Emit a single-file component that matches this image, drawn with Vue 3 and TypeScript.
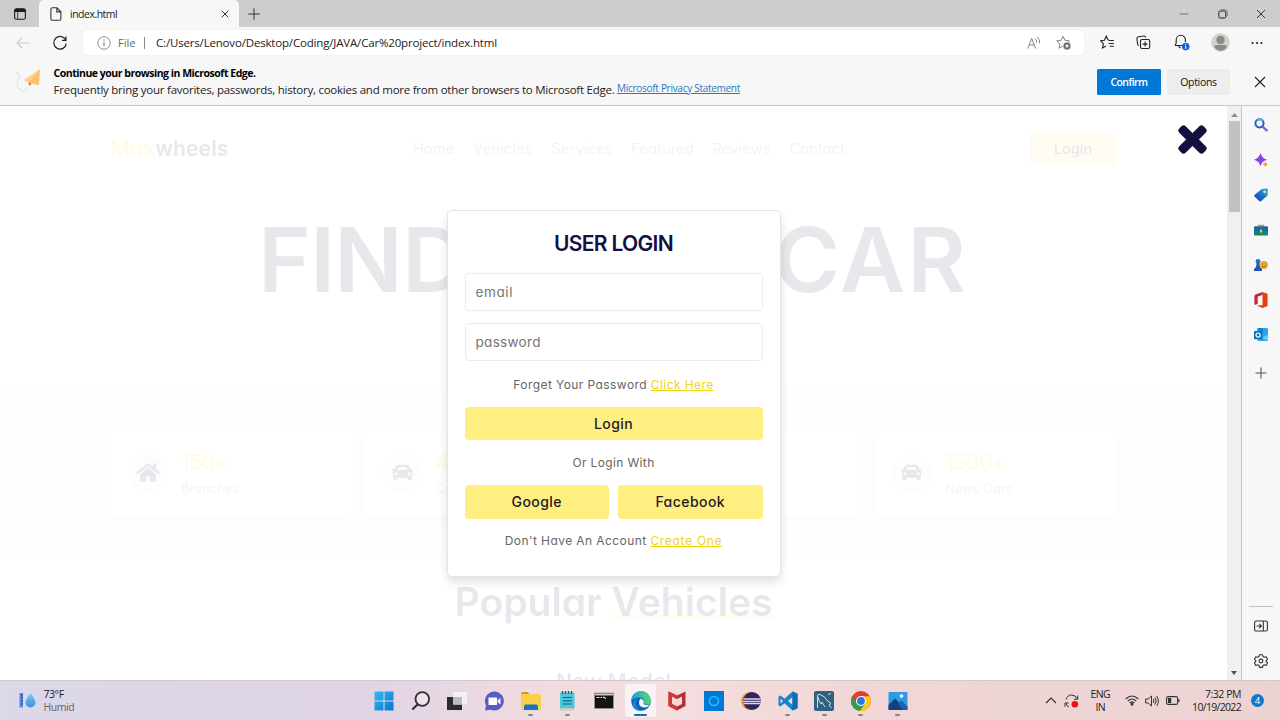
<script setup lang="ts">
interface Stat { value: string; label: string; icon: 'home' | 'car' }

const navLinks = ['Home', 'Vehicles', 'Services', 'Featured', 'Reviews', 'Contact']
const stats: Stat[] = [
  { value: '150+', label: 'Branches', icon: 'home' },
  { value: '4770+', label: 'Cars Sold', icon: 'car' },
  { value: '320+', label: 'Happy Clients', icon: 'car' },
  { value: '1500+', label: 'News Cars', icon: 'car' },
]
</script>

<template>
  <div class="desktop">
    <div class="tabstrip">
      <svg class="tab-actions" width="12" height="12" viewBox="0 0 12 12"><rect x=".6" y=".8" width="10.8" height="10.4" rx="1.8" fill="none" stroke="#1c1c1c" stroke-width="1.1" /><path d="M.6 4V2.5Q.6.8 2.4.8h7.2q1.8 0 1.8 1.7V4z" fill="#1c1c1c" /><path d="M3.7 4v7" stroke="#1c1c1c" stroke-width=".8" /></svg>
      <div class="tab">
        <svg width="12" height="14" viewBox="0 0 12 14" fill="none" stroke="#333" stroke-width="1.1"><path d="M2.3.8h4.6l4 4v7q0 1.4-1.4 1.4H2.3Q.9 13.2.9 11.8V2.2Q.9.8 2.3.8zM6.8.9v4h4" /></svg>
        <span class="tab-title">index.html</span>
        <svg width="8" height="8" viewBox="0 0 8 8" stroke="#333" stroke-width="1"><path d="M.7.7l6.6 6.6M7.3.7L.7 7.3" /></svg>
      </div>
      <svg class="new-tab" width="12" height="12" viewBox="0 0 12 12" stroke="#333" stroke-width="1"><path d="M6 .3v11.4M.3 6h11.4" /></svg>
      <div class="window-controls">
        <svg width="10" height="10" viewBox="0 0 10 10"><path d="M.5 5h9" stroke="#777" /></svg>
        <svg width="10" height="10" viewBox="0 0 10 10" fill="none" stroke="#222"><rect x=".8" y="2" width="7" height="7" rx="1.4" /><path d="M2.8.8h4.4Q9.2.8 9.2 2.8v4.4" stroke="#777" /></svg>
        <svg width="10" height="10" viewBox="0 0 10 10" stroke="#333"><path d="M1 1l8 8M9 1L1 9" /></svg>
      </div>
    </div>

    <div class="toolbar">
      <svg class="back" width="14" height="12" viewBox="0 0 14 12" fill="none" stroke="#c9c9c9" stroke-width="1.1"><path d="M13.5 6H1M6 1L1 6l5 5" /></svg>
      <svg class="reload" width="16" height="16" viewBox="0 0 16 16" fill="none" stroke="#222" stroke-width="1.2"><path d="M13.8 5.2A6.3 6.3 0 1 0 14.3 8.6M14 1.4v4h-4" /></svg>
      <div class="address">
        <svg width="14" height="14" viewBox="0 0 14 14"><circle cx="7" cy="7" r="6.2" fill="none" stroke="#8a8a8a" /><path d="M7 6v4.2M7 3.6v1.2" stroke="#777" stroke-width="1.1" /></svg>
        <span class="scheme">File</span><i class="bar" />
        <span class="url">C:/Users/Lenovo/Desktop/Coding/JAVA/Car%20project/index.html</span>
        <svg class="read" width="14" height="14" viewBox="0 0 14 14" fill="none" stroke="#858585"><path d="M.8 12.5L4.7 2.5l3.9 10M2.2 9h5M8.2 2.6q1.8 1.5 1.3 4M10.2 1q3 2.6 2.4 6.2" /></svg>
        <svg width="16" height="16" viewBox="0 0 16 16"><path d="M7 1.3l1.9 4 4.4.5-3.2 3 .9 4.4L7 11l-3.9 2.2.8-4.4-3.2-3 4.4-.5z" fill="none" stroke="#858585" /><circle cx="11" cy="11" r="3.9" fill="#666" stroke="#fff" stroke-width=".6" /><path d="M11 9v4M9 11h4" stroke="#fff" /></svg>
      </div>
      <div class="tools">
        <svg width="15" height="15" viewBox="0 0 15 15" fill="none" stroke="#222" stroke-width="1.1"><path d="M9.5 5.3L8.1 5 6.2 1.2l-1.8 4-4 .5 3 3-.9 4.3L6 11M9.3 5.5h4.5M8.7 8.5h5.1M9.7 11.2h4.1" /></svg>
        <svg width="15" height="15" viewBox="0 0 15 15" fill="none" stroke="#222" stroke-width="1.1"><rect x="4.5" y="4.5" width="9.2" height="9" rx="1.6" /><path d="M9.1 6.6v5M6.6 9.1h5M2.7 10.6Q1.8 10 1.5 8.6L.9 3.7Q.8 2 2.5 1.7L8 1q1.4-.1 1.8 1.5" /></svg>
        <svg class="bell" width="16" height="17" viewBox="0 0 16 17"><path d="M1 11.5h8M1 11.5l1.2-2.3V5.8a4.6 4.6 0 0 1 9.2 0V8M4.800 12q0 1.700 1.900 1.900" fill="none" stroke="#222" stroke-width="1.1" /><circle cx="11.700" cy="12.600" r="3.800" fill="#1a63d2" /><path d="M11.700 11.800v3M11.700 10v1" stroke="#fff" /></svg>
        <svg width="19" height="19" viewBox="0 0 19 19"><circle cx="9.5" cy="9.5" r="9.3" fill="#d2d0ce" /><circle cx="9.5" cy="7" r="4.2" fill="#8c8884" /><path d="M3.3 14q0-2 2-2h8.4q2 0 2 2-2.3 3.700-6.200 3.700T3.300 14z" fill="#8c8884" /></svg>
        <svg width="12" height="4" viewBox="0 0 12 4" fill="#222"><circle cx="1.600" cy="2" r="1.100" /><circle cx="6" cy="2" r="1.100" /><circle cx="10.400" cy="2" r="1.100" /></svg>
      </div>
    </div>

    <div class="infobar">
      <svg class="plane" width="26" height="28" viewBox="0 0 26 28"><path d="M1 6.500q4.500.500 3 5.500t-2 7 4 5.500 6-4" fill="none" stroke="#e6e6e6" stroke-width="1.300" /><path d="M25 3L8.500 14.200l4.500 2z" fill="#ffd488" /><path d="M25 3L13 16.200l11 3.300z" fill="#fdc06a" /><path d="M13 16.200l1.600 4 2.200-2.700z" fill="#d98a35" /></svg>
      <div class="info-text">
        <strong>Continue your browsing in Microsoft Edge.</strong>
        <p><span>Frequently bring your favorites, passwords, history, cookies and more from other browsers to Microsoft Edge.</span><a>Microsoft Privacy Statement</a></p>
      </div>
      <button class="confirm">Confirm</button>
      <button class="options">Options</button>
      <svg width="12" height="12" viewBox="0 0 12 12" stroke="#222" stroke-width="1.1"><path d="M1 1l10 10M11 1L1 11" /></svg>
    </div>

    <div class="workspace">
      <div class="page">
        <header>
          <div class="logo"><span>Max</span>wheels</div>
          <nav><a v-for="link in navLinks" :key="link">{{ link }}</a></nav>
          <div class="header-login">Login</div>
        </header>
        <h1><span>FIND</span><span class="car-word">CAR</span></h1>
        <section class="stats">
          <div v-for="s in stats" :key="s.label" class="stat">
            <div class="disc">
              <svg v-if="s.icon === 'home'" width="24" height="21" viewBox="0 0 576 512"><path d="M280 148L96 300v164q0 16 16 16l112-1q16 0 16-16v-95q0-16 16-16h64q16 0 16 16v95q0 16 16 16h112q16 0 16-16V300L296 148q-8-6-16 0zM572 251l-84-69V44q0-12-12-12h-56q-12 0-12 12v72l-89-74q-31-24-61 0L4 251q-9 8-2 17l26 31q8 9 17 2L280 107q8-6 16 0l235 194q9 7 17-2l26-31q7-9-2-17z" fill="#130f40" /></svg>
              <svg v-else width="21" height="21" viewBox="0 0 512 512"><path fill-rule="evenodd" d="M500 168h-56l-23-57q-22-47-74-47H165q-52 0-74 47l-23 57H12q-14 2-12 15l6 24q3 9 12 9h20q-22 18-22 48v48q0 24 16 42v54q0 32 32 32h32q32 0 32-32v-24h256v24q0 32 32 32h32q32 0 32-32v-54q16-18 16-42v-48q0-30-22-48h20q9 0 12-9l6-24q2-13-12-15zM151 135q4-11 14-11h182q10 0 14 11l23 57H128zM96 320q-39 0-44-32t32-40q31-4 60 60 2 12-48 12zm320 0q-50 0-48-12 29-64 60-60 37 8 32 40t-44 32z" fill="#130f40" /></svg>
            </div>
            <div><b>{{ s.value }}</b><small>{{ s.label }}</small></div>
          </div>
        </section>
        <h2>Popular <span>Vehicles</span></h2>
        <h3>New Model</h3>

        <div class="veil">
          <svg class="close" width="29" height="29" viewBox="0 0 29 29" fill="#130f40"><rect x="-2.700" y="10" width="34.400" height="9" rx="3" transform="rotate(45 14.500 14.500)" /><rect x="-2.700" y="10" width="34.400" height="9" rx="3" transform="rotate(-45 14.500 14.500)" /></svg>
          <form class="login" @submit.prevent>
            <h4>USER LOGIN</h4>
            <input class="email" type="email" placeholder="email">
            <input type="password" placeholder="password">
            <p class="forgot">Forget Your Password <a>Click Here</a></p>
            <button>Login</button>
            <p class="or">Or Login With</p>
            <div class="social"><button>Google</button><button>Facebook</button></div>
            <p class="signup">Don't Have An Account <a>Create One</a></p>
          </form>
        </div>
      </div>

      <div class="scrollbar">
        <svg width="7" height="4" viewBox="0 0 7 4"><path d="M0 4l3.500-4L7 4z" fill="#8f8f8f" /></svg>
        <i />
        <svg class="down" width="6" height="4" viewBox="0 0 6 4"><path d="M0 0h6L3 4z" fill="#505050" /></svg>
      </div>

      <aside>
        <svg viewBox="0 0 14 14"><circle cx="5.500" cy="5.300" r="4.100" fill="none" stroke="#1b62d2" stroke-width="2" /><path d="M3 2.200Q6-.1 8.700 2.700" fill="none" stroke="#49b4ef" stroke-width="1.600" /><path d="M9 9l3.600 3.400" stroke="#8a55d7" stroke-width="2.300" stroke-linecap="round" /></svg>
        <svg viewBox="0 0 14 14"><defs><linearGradient id="spark" x1="0" x2="1" y2="1"><stop stop-color="#5c5df0" /><stop offset="1" stop-color="#b32de0" /></linearGradient></defs><path d="M6.500 0q1.200 5.300 6.500 6.700-5.300 1.300-6.500 6.800Q5.200 8 0 6.700 5.200 5.300 6.500 0z" fill="url(#spark)" /><path d="M11.300 8.500q.5 2.300 2.700 2.800-2.200.5-2.700 2.700-.5-2.200-2.700-2.700 2.200-.5 2.700-2.800z" fill="#e8a91f" /></svg>
        <svg viewBox="0 0 14 14"><defs><linearGradient id="tag" x1="1" x2="0" y2="1"><stop stop-color="#35b0ea" /><stop offset=".6" stop-color="#1566c7" /><stop offset="1" stop-color="#174aa3" /></linearGradient></defs><path d="M8 1l5-.5q1 0 .9 1L13.600 7q0 .6-.6 1L7 13.300q-.8.6-1.500 0L.4 8.500q-.6-.8.1-1.500L7 1.400z" fill="url(#tag)" /><circle cx="10.600" cy="3.800" r="1.400" fill="#ffe07a" /></svg>
        <svg viewBox="0 0 14 14"><path d="M4.500 4V2.500h5V4" fill="none" stroke="#d89b20" stroke-width="1.300" /><rect y="3.600" width="14" height="9" rx="1" fill="#17836a" /><path d="M0 4.600q0-1 1-1h12q1 0 1 1V8H0z" fill="#1769ad" /><rect x="6" y="6.400" width="2.200" height="3.200" rx=".6" fill="#f3c23e" /></svg>
        <svg viewBox="0 0 14 14"><circle cx="10" cy="7" r="3.900" fill="#eba82b" /><path d="M8 8q2 2.200 4 0M8.600 5.700v.6M11.400 5.700v.6" stroke="#95600b" stroke-width=".9" fill="none" /><circle cx="4" cy="3.500" r="2.400" fill="#246bc8" /><path d="M2.800 5h2.500L6 9l2 2v2H0v-2l2-2z" fill="#1b55b2" /></svg>
        <svg class="office" viewBox="0 0 14 16"><path d="M8.500 0L13.600 1.800v12.200L8.500 16 2.500 13.500l6-.3z" fill="#e2420e" /><path d="M8.500 0L1.600 2.600Q.4 3.200.4 4.500v7.200q0 1.700 1.700.8l1.600-.7V4.400l4.800-1.300z" fill="#c4243a" /></svg>
        <svg viewBox="0 0 14 14"><rect x="3.500" width="10.500" height="13" rx="1" fill="#28a8ea" /><path d="M3.500 1q0-1 1-1H9v5H3.500z" fill="#1485d4" /><path d="M14 6.500L8 10l6 3z" fill="#67c9f5" /><rect y="3" width="8.300" height="8.300" rx="1" fill="#0b6fbf" /><circle cx="4.100" cy="7.100" r="2.100" fill="none" stroke="#fff" stroke-width="1.200" /></svg>
        <svg class="add" viewBox="0 0 14 14" stroke="#555" stroke-width="1.100"><path d="M7 1.500v11M1.500 7h11" /></svg>
        <div class="aside-foot">
          <svg viewBox="0 0 14 14" fill="none" stroke="#333" stroke-width="1.100"><rect x=".6" y="2" width="12.800" height="10" rx="1.600" /><path d="M9.300 2v10M2.500 7h4.700M5.300 4.900L7.400 7 5.300 9.100" /></svg>
          <svg viewBox="0 0 14 14" fill="none" stroke="#333" stroke-width="1.100" stroke-linejoin="round"><circle cx="7" cy="7" r="1.900" /><path d="M5.500.7h3L9 2.600l1.300.7 1.900-.6 1.400 2.500L12.200 6.600v.9l1.400 1.400-1.400 2.500-1.900-.6-1.300.7-.5 1.900h-3L5 11.500l-1.300-.7-1.900.6L.4 8.900l1.400-1.400v-.9L.4 5.200l1.400-2.500 1.900.6L5 2.600z" /></svg>
        </div>
      </aside>
    </div>

    <div class="taskbar">
      <div class="weather">
        <svg width="17" height="17" viewBox="0 0 17 17"><defs><linearGradient id="drop" x2="0" y2="1"><stop stop-color="#75d1f2" /><stop offset="1" stop-color="#438ae6" /></linearGradient></defs><rect x=".5" y="1" width="3.500" height="14.500" rx=".5" fill="#4f8ee0" /><path d="M2 3h2M2 6h2M2 9h2M2 12h2" stroke="#213e80" /><path d="M11.500 1q5 6.500 5 9.500a4.900 4.900 0 0 1-10 0Q6.500 7.500 11.500 1z" fill="url(#drop)" /></svg>
        <div><span>73°F</span><span class="dim">Humid</span></div>
      </div>
      <div class="apps">
        <div><svg viewBox="0 0 20 20"><defs><linearGradient id="win" x2="1" y2="1"><stop stop-color="#35baf0" /><stop offset="1" stop-color="#0875cf" /></linearGradient></defs><path d="M.5.500h9v9h-9zM10.500.500h9v9h-9zM.5 10.500h9v9h-9zM10.500 10.500h9v9h-9z" fill="url(#win)" /></svg></div>
        <div><svg viewBox="0 0 20 20" fill="none" stroke="#303033" stroke-width="1.800"><circle cx="11.300" cy="8" r="6.800" fill="#ffffff55" /><path d="M6.800 13.200L1.300 18.500" stroke-width="2.200" /></svg></div>
        <div><svg viewBox="0 0 20 20"><rect y="6" width="15" height="13" fill="#2b2a2d" /><path d="M6 1h14.500v12.500H6z" fill="#f3f1f3" /><path d="M6 6h9v7.500H6z" fill="#bdbbbe" /></svg></div>
        <div><svg viewBox="0 0 20 20"><path d="M10.500.500a9.500 9.500 0 1 1-4 18.200L1 19.500l1-5A9.500 9.500 0 0 1 10.500.500z" fill="#5a5bc4" /><path d="M4.500 6.500h8.500v7.500H4.500zM13.700 9.300L16.500 7v6.500l-2.800-2.200z" fill="#fff" /></svg></div>
        <div class="running"><svg viewBox="0 0 20 20"><path d="M0 3q0-2 2-2h4.500L9 3.500H0z" fill="#d9911b" /><rect y="3" width="20" height="16" rx="1.500" fill="#f9cf4b" /><path d="M3 19v-3.700q0-1.800 1.800-1.800h10.400q1.800 0 1.800 1.800V19z" fill="#1673c4" /></svg></div>
        <div class="running"><svg viewBox="0 0 20 20"><rect x="3" y="1.500" width="14.500" height="16.500" rx="1" fill="#4cc6dc" /><path d="M3 17h14.500v1.500q0 1-1 1H4q-1 0-1-1z" fill="#c9cdb6" /><path d="M5.500 0v3M8.500 0v3M11.500 0v3M14.500 0v3" stroke="#185a78" stroke-width="1.300" /><path d="M5.800 6.500h9M5.800 9.800h9M5.800 13h9" stroke="#12677f" stroke-width="1.200" /></svg></div>
        <div><svg viewBox="0 0 20 20"><rect x=".5" y="2" width="19" height="15.500" fill="#131313" stroke="#999" stroke-width=".8" /><path d="M1 2.500h18v2H1z" fill="#ccc" /><path d="M2.500 6.500h3M6.500 6.500H8M9 6l3 1.500" stroke="#eee" stroke-width="1.100" /></svg></div>
        <div class="active"><svg viewBox="0 0 20 20"><defs><linearGradient id="edge" x1="0" x2="1"><stop stop-color="#1e9fe0" /><stop offset="1" stop-color="#56d66c" /></linearGradient></defs><circle cx="10" cy="10" r="9.800" fill="#0c61b5" /><path d="M.2 10A9.800 9.800 0 0 1 19.800 9.500q0 4.300-4.800 4.300-3 0-3-1.500.8-.6.8-2Q12.500 6.500 8 6.500 2.500 6.500.2 10z" fill="url(#edge)" /><path d="M8 7.500q4.300 0 4.800 3.500 0 1-.8 1.700 2 2.300 6.500.9-1.500 3-4.500 3Q8 16.400 8 11.500 8 9 9.500 7.700z" fill="#e9f7ff" /><path d="M7 7.500Q3.500 10 5 14.500T11.500 19.600Q4 20.600 1.200 14.500 2 8.500 7 7.500z" fill="#1787d6" /></svg></div>
        <div><svg viewBox="0 0 20 20"><path d="M1.500.500l8.500 4 8.500-4v14.500L10 19.500 1.500 15z" fill="#b92e32" /><path d="M5 5.500l5 2.500 5-2.500v7.500l-5 2.500L5 13z" fill="#f3dada" /><path d="M1.500.500l8.500 4v3.500L5 5.500V13l5 2.500v4L1.500 15z" fill="#d1383a" /></svg></div>
        <div><svg viewBox="0 0 20 20"><rect width="20" height="20" fill="#0078d7" /><circle cx="10" cy="10" r="4.500" fill="none" stroke="#20c5f5" stroke-width="1.500" /></svg></div>
        <div><svg viewBox="0 0 20 20"><circle cx="9" cy="10" r="9" fill="#f39a2f" /><circle cx="11" cy="10" r="9" fill="#34245c" /><path d="M2.500 8h17.200M2 10.300h18M2.500 12.500h17.200" stroke="#ddd9ec" stroke-width="1.300" /></svg></div>
        <div class="running"><svg viewBox="0 0 20 20"><path d="M14.500.500L19.500 2.800v14.400l-5 2.300-8-7.300-4 3.300-2-1V5.500l2-1 4 3.300zM14.500 6L10 10l4.500 4zM2.500 7.500v5L5 10z" fill="#1683cf" fill-rule="evenodd" /><path d="M14.500.500l5 2.300v14.400l-5 2.300z" fill="#0f6bb5" /></svg></div>
        <div class="running"><svg viewBox="0 0 20 20"><rect width="20" height="20" rx="2" fill="#31617e" /><path d="M3.500 17V5q0-2.500 2.500-1.500Q11 5 13 9.500l4 3-2 1.500 2.500 3M4 6q1 5 3 7l1-2 3 5M14 3.500l3-1" fill="none" stroke="#dfeaf0" stroke-width=".9" /></svg></div>
        <div class="running"><svg viewBox="0 0 20 20"><circle cx="10" cy="10" r="10" fill="#dd3f35" /><path d="M1.300 5A10 10 0 0 0 8.900 19.900L14.300 12.500 5.700 12.500z" fill="#2aa24c" /><path d="M10 5.300h8.800A10 10 0 0 1 8.900 19.900l5.400-7.400z" fill="#fbc916" /><circle cx="10" cy="10" r="5" fill="#fff" /><circle cx="10" cy="10" r="3.900" fill="#2b78e6" /></svg></div>
        <div class="running"><svg viewBox="0 0 20 20"><rect x=".5" y="1" width="19" height="18" rx="1" fill="#2f9be8" /><path d="M.5 14L7 7.500 18.500 19H.5z" fill="#12407f" /><path d="M10 12.500l3.500-3 6 6V19h-4z" fill="#1f62ad" /><circle cx="13.500" cy="5" r="1.800" fill="#fff" /></svg></div>
      </div>
      <div class="tray">
        <svg class="chevron" width="12" height="7" viewBox="0 0 12 7" fill="none" stroke="#333" stroke-width="1.200"><path d="M1 6l5-5 5 5" /></svg>
        <svg class="sync" width="15" height="16" viewBox="0 0 15 16" fill="none" stroke="#333"><path d="M2 6.500Q3.500 2 7.500 2t6 4M13.700 2.500v3.700H10M5 14Q2.500 13 1.700 10M1 13.700V10h3.700" /><circle cx="10.800" cy="11.200" r="3.300" fill="#f00d14" stroke="none" /></svg>
        <div class="lang"><span>ENG</span><span>IN</span></div>
        <svg class="wifi" width="14" height="11" viewBox="0 0 14 11" fill="none" stroke="#333" stroke-width="1.100"><path d="M.7 4Q7-2 13.300 4M2.800 6Q7 2 11.200 6M4.700 8Q7 5.800 9.300 8" /><circle cx="7" cy="9.300" r=".9" fill="#333" /></svg>
        <svg class="sound" width="14" height="12" viewBox="0 0 14 12" fill="none" stroke="#333"><path d="M.7 4h2.500L6.500 1v10L3.200 8H.7zM8.300 4q1.200 2 0 4M10 2.500q2.300 3.500 0 7M11.700 1q3.300 5 0 10" /></svg>
        <svg class="battery" width="14" height="9" viewBox="0 0 14 9"><rect x=".6" y=".6" width="11" height="7.800" rx="1.500" fill="none" stroke="#333" stroke-width="1.100" /><path d="M2 2h3.200v5H2zM12.300 3h1.200v3h-1.200z" fill="#333" /></svg>
        <div class="clock"><span>7:32 PM</span><span class="date">10/19/2022</span></div>
        <b class="badge">4</b>
      </div>
    </div>
  </div>
</template>

<style>
body { overflow: hidden; }
</style>

<style scoped>
* { box-sizing: border-box; }
svg { display: block; flex: none; }
h1, h2, h3, h4, p { margin: 0; }
button { border: 0; padding: 0; }
.desktop { width: 1280px; height: 720px; display: flex; flex-direction: column; overflow: hidden; background: #f7f7f7; font-family: 'Open Sans', 'Noto Sans', sans-serif; color: #222; }

.tabstrip { height: 27px; flex: none; background: #cdcdcd; display: flex; align-items: center; }
.tab-actions { margin-left: 14px; }
.tab { width: 200px; height: 27px; margin-left: 13px; padding: 0 10px 0 11px; background: #f7f7f7; border-radius: 5px 5px 0 0; display: flex; align-items: center; }
.tab-title { font-size: 10.5px; letter-spacing: -.5px; margin-left: 8px; flex: 1; }
.new-tab { margin-left: 9px; }
.window-controls { margin-left: auto; margin-right: 14px; display: flex; gap: 28.5px; }

.toolbar { height: 31px; flex: none; display: flex; align-items: center; }
.back { margin-left: 16px; }
.reload { margin-left: 22px; }
.address { margin-left: 15px; width: 1001px; height: 25px; background: #fff; border-radius: 4px; box-shadow: 0 0 2px #0001; padding: 0 12px 0 14px; display: flex; align-items: center; }
.scheme { font-size: 11px; color: #666; margin-left: 7px; width: 19px; white-space: nowrap; }
.bar { width: 1px; height: 12px; background: #888; margin: 0 11px 0 7px; }
.url { font-size: 11.5px; letter-spacing: -.175px; flex: 1; }
.read { margin-right: 15px; }
.tools { flex: 1; display: flex; align-items: center; justify-content: space-between; padding: 0 17px 0 16px; }
.bell { margin-left: 1px; }

.infobar { height: 48px; flex: none; border-bottom: 1px solid #c8c8c8; display: flex; align-items: center; padding-right: 14px; color: #000; }
.plane { margin: 0 0 3px 15px; }
.info-text { margin-left: 12.5px; flex: 1; display: flex; flex-direction: column; white-space: nowrap; }
.info-text strong { font-size: 10.5px; letter-spacing: -.48px; line-height: 16px; }
.info-text p { display: flex; line-height: 18px; color: #222; }
.info-text span { font-size: 11.5px; letter-spacing: -.239px; width: 563.5px; }
.info-text a { font-size: 10px; letter-spacing: -.284px; line-height: 14px; color: #2a77c2; text-decoration: underline; }
.infobar button { width: 63px; height: 26px; border-radius: 1.5px; font: 400 10.5px 'Open Sans', sans-serif; letter-spacing: -.32px; }
.infobar .confirm { background: #0078d7; color: #fff; font-weight: 600; letter-spacing: -.55px; width: 64px; }
.infobar .options { background: #ededed; color: #111; margin: 0 24px 0 6px; }

.workspace { flex: 1; min-height: 0; display: flex; }
.page { position: relative; width: 1227px; background: #fff; overflow: hidden; color: #130f40; font-family: Inter, sans-serif; font-feature-settings: 'cv11'; }
header { height: 85px; padding: 0 110.5px; display: flex; align-items: center; justify-content: space-between; }
.logo { font-size: 21px; font-weight: 600; letter-spacing: .13px; }
.logo span { color: #f9d806; }
nav { display: flex; gap: 18.5px; font-size: 14.5px; font-weight: 300; letter-spacing: .35px; color: #666; }
.header-login { width: 87px; height: 33px; border-radius: 4px; background: #ffe680; display: flex; align-items: center; justify-content: center; font-size: 14.5px; font-weight: 500; }
h1 { display: flex; justify-content: space-between; padding: 14px 261px 0 258px; font-size: 90px; font-weight: 600; line-height: 110px; letter-spacing: -.75px; height: 198px; }
.car-word { letter-spacing: 2px; margin-right: -2px; }
.stats { height: 168px; background: #eee; padding: 43px 110.5px 0; display: grid; grid-template-columns: repeat(4, 1fr); gap: 13px; align-items: start; }
.stat { height: 83px; background: #fff; border-radius: 5px; box-shadow: 0 5px 10px rgba(0, 0, 0, .1); display: flex; align-items: center; padding: 0 17px; gap: 13.5px; }
.disc { width: 40px; height: 40px; border-radius: 50%; background: #e6e6e6; display: flex; align-items: center; justify-content: center; margin-top: -2px; }
.stat b { display: block; color: #f9d806; font-size: 21px; font-weight: 600; letter-spacing: -.75px; line-height: 30px; }
.stat small { display: block; color: #666; font-size: 12.5px; font-weight: 300; letter-spacing: .33px; line-height: 22px; }
h2 { text-align: center; font-size: 39px; font-weight: 600; line-height: 50px; margin-top: 19.5px; letter-spacing: .04px; }
h2 span { background: linear-gradient(#ffe680, #ffe680) 0 36px / 100% 6px no-repeat; }
h3 { text-align: center; font-size: 21px; font-weight: 500; line-height: 30px; margin-top: 40px; letter-spacing: .18px; }

.veil { position: absolute; inset: 0; background: rgba(255, 255, 255, .9); display: flex; justify-content: center; align-items: flex-start; padding-top: 104px; }
.close { position: absolute; right: 20px; top: 19px; }
.login { width: 334px; height: 367px; background: #fff; border: 1px solid #e4e4e7; border-radius: 5px; box-shadow: 0 5px 10px rgba(0, 0, 0, .12); padding: 17px 17px 0; display: flex; flex-direction: column; text-align: center; }
h4 { font-size: 21px; font-weight: 600; letter-spacing: -.67px; line-height: 31px; }
input { height: 38.5px; flex: none; border: 1px solid #ececed; border-radius: 4px; padding: 0 10px; margin-top: 11.5px; font: 400 13.5px Inter, sans-serif; font-feature-settings: 'cv11'; letter-spacing: .3px; outline: 0; background: #fff; }
input.email { margin-top: 13.5px; letter-spacing: .6px; }
input::placeholder { color: #757575; }
.login p { font-size: 12px; letter-spacing: .36px; line-height: 20px; color: #666; }
.login p.forgot { margin: 13.5px 0 12px; letter-spacing: .42px; }
.login p.or { margin: 12.5px 0; }
.login p.signup { letter-spacing: .42px; margin-top: 12.5px; }
.login a { color: #f2d50d; text-decoration: underline; }
.signup a { letter-spacing: .7px; }
.login button { height: 33.5px; flex: none; background: #ffee80; border-radius: 4px; color: #1d1a2b; font: 500 14px Inter, sans-serif; font-feature-settings: 'cv11'; letter-spacing: .45px; }
.social { display: grid; grid-template-columns: 1fr 1fr; gap: 9px; }

.scrollbar { width: 14px; background: #f0f0f0; display: flex; flex-direction: column; align-items: center; padding: 7px 0 5px; }
.scrollbar i { width: 11px; height: 91px; background: #c1c1c1; margin-top: 4px; }
.down { margin-top: auto; }
aside { flex: 1; border-left: 1px solid #c4c4c4; background: #f7f7f7; display: flex; flex-direction: column; align-items: center; gap: 21px; padding-top: 12px; }
aside svg { width: 14px; height: 14px; }
aside .office { height: 16px; margin: -1px 0; }
.add { margin-top: 3px; }
.aside-foot { margin-top: auto; width: 24px; border-top: 1px solid #c0c0c0; padding: 12px 0; display: flex; flex-direction: column; align-items: center; gap: 21px; }

.taskbar { height: 40px; flex: none; border-top: 1px solid #d3c8cf; background: linear-gradient(90deg, #dcd8e9 0, #dfd3e7 28%, #f0dcdf 42%, #f4dede 52%, #f1d5d7 70%, #ecd3d2 100%); display: flex; align-items: center; font-size: 10.5px; line-height: 13px; letter-spacing: -.45px; white-space: nowrap; }
.taskbar span { display: block; }
.weather { width: 365.5px; padding-left: 18.5px; display: flex; align-items: center; gap: 8px; }
.dim { color: #666; }
.apps { display: flex; width: 550.5px; height: 39px; }
.apps > div { flex: 1; display: flex; align-items: center; justify-content: center; position: relative; }
.apps svg { width: 20px; height: 20px; position: relative; }
.running::after, .active::after { content: ''; position: absolute; bottom: 4px; left: calc(50% - 2.5px); width: 5px; height: 2.5px; border-radius: 2px; background: #8b8387; }
.active::after { width: 13px; left: calc(50% - 6.5px); background: #0b6dc0; }
.active::before { content: ''; position: absolute; width: 31px; height: 33px; border-radius: 3px; background: #fbf2f3; }
.tray { flex: 1; display: flex; align-items: center; justify-content: flex-end; padding-right: 16px; }
.chevron { margin-right: 7px; }
.sync { margin-right: 11px; }
.lang { text-align: center; letter-spacing: -.6px; margin-right: 15px; }
.wifi { margin-right: 6px; }
.sound { margin-right: 7px; }
.battery { margin-right: 12px; }
.clock { text-align: right; }
.date { letter-spacing: -.68px; }
.badge { width: 13px; height: 13px; border-radius: 50%; background: #0a78cf; color: #fff; font-size: 9.5px; font-weight: 400; text-align: center; letter-spacing: 0; margin-left: 10px; }
</style>
